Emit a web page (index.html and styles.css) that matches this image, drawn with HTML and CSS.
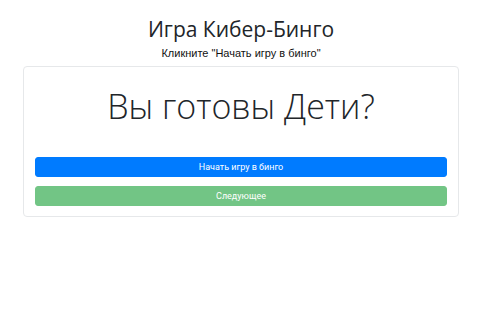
FILE: index.html
```html
<!DOCTYPE html>
<html lang="ru">
<head>
    <meta charset="UTF-8">
    <meta name="viewport" content="width=device-width, initial-scale=1.0">
    <title>Игра Кибер-Бинго</title>
    <link rel="stylesheet" href="styles.css">
</head>
<body>
    <div class="container">
        <header class="header">
            <h1>Игра Кибер-Бинго</h1>
            <p class="hint">Кликните "Начать игру в бинго"</p>
        </header>
        <div class="card">
            <div class="question">Вы готовы Дети?</div>
            <div class="actions">
                <button class="btn btn-start">Начать игру в бинго</button>
                <button class="btn btn-next" disabled>Следующее</button>
            </div>
        </div>
    </div>
</body>
</html>
```

FILE: styles.css
```css
body {
    margin: 0;
    font-family: 'Open Sans', 'Noto Sans', sans-serif;
    color: #212529;
    background: #fff;
}

.container {
    width: 436px;
    margin-left: 23px;
    padding-top: 15px;
}

.header {
    text-align: center;
}

h1 {
    margin: 0;
    font-size: 21px;
    font-weight: 400;
    line-height: 28px;
}

.hint {
    margin: 3px 0 6px;
    font-family: 'Liberation Sans', Arial, sans-serif;
    font-size: 11px;
    line-height: 14px;
    color: #111;
}

.card {
    border: 1px solid #e6e8ea;
    border-radius: 4px;
    padding: 15px 11px 10px 11px;
}

.question {
    text-align: center;
    font-size: 34px;
    font-weight: 300;
    line-height: 48px;
    margin-bottom: 27px;
}

.actions {
    display: flex;
    flex-direction: column;
    gap: 9px;
}

.btn {
    display: block;
    width: 100%;
    height: 20px;
    border: 1px solid transparent;
    border-radius: 3px;
    font-family: Roboto, 'Open Sans', sans-serif;
    font-size: 9px;
    color: #fff;
    padding: 0;
}

.btn-start {
    background: #007bff;
    border-color: #007bff;
}

.btn-next {
    background: #28a745;
    border-color: #28a745;
    opacity: 0.65;
}
```
